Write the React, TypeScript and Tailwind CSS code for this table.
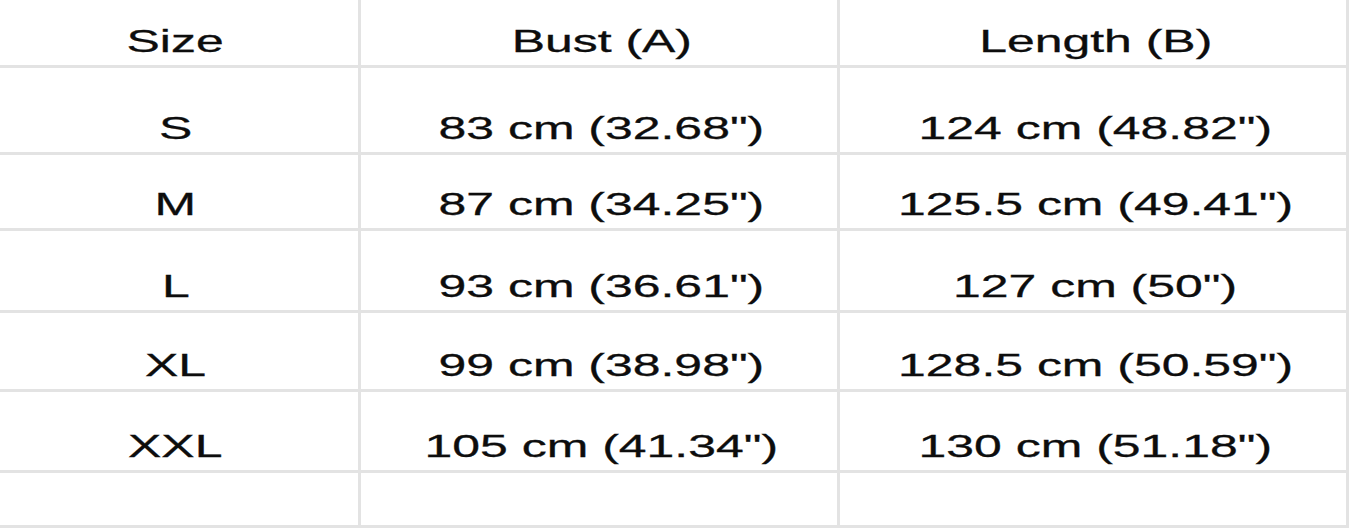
import { FC, Fragment } from "react";

const rows = [
    { size: "S", bust: '83 cm (32.68")', length: '124 cm (48.82")', h: "h-[84px]" },
    { size: "M", bust: '87 cm (34.25")', length: '125.5 cm (49.41")', h: "h-[73px]" },
    { size: "L", bust: '93 cm (36.61")', length: '127 cm (50")', h: "h-[79px]" },
    { size: "XL", bust: '99 cm (38.98")', length: '128.5 cm (50.59")', h: "h-[76px]" },
    { size: "XXL", bust: '105 cm (41.34")', length: '130 cm (51.18")', h: "h-[78px]" },
];

const Cell: FC<{ text?: string; h: string; first?: boolean }> = ({ text, h, first }) => (
    <div
        className={`bg-white flex items-end justify-center pb-[8px] ${h} ${
            first ? "pr-[7px]" : "pl-[5px]"
        }`}
    >
        {text && (
            <span className="inline-block scale-x-[1.56] text-[32px] leading-none text-[#0d0d0d] [-webkit-text-stroke:0.3px_#0d0d0d]">
                {text}
            </span>
        )}
    </div>
);

const App: FC = () => {
    return (
        <div
            className="w-[1350px] h-[528px] bg-white overflow-hidden"
            style={{ fontFamily: '"Liberation Sans", Arial, sans-serif' }}
        >
            <div className="w-[1349px] grid grid-cols-[358px_476px_506px] gap-[3px] bg-[#e3e3e3] pr-[3px] pb-[3px]">
                <Cell text="Size" h="h-[65px]" first />
                <Cell text="Bust (A)" h="h-[65px]" />
                <Cell text="Length (B)" h="h-[65px]" />
                {rows.map((r) => (
                    <Fragment key={r.size}>
                        <Cell text={r.size} h={r.h} first />
                        <Cell text={r.bust} h={r.h} />
                        <Cell text={r.length} h={r.h} />
                    </Fragment>
                ))}
                <Cell h="h-[52px]" first />
                <Cell h="h-[52px]" />
                <Cell h="h-[52px]" />
            </div>
        </div>
    );
};

export default App;
